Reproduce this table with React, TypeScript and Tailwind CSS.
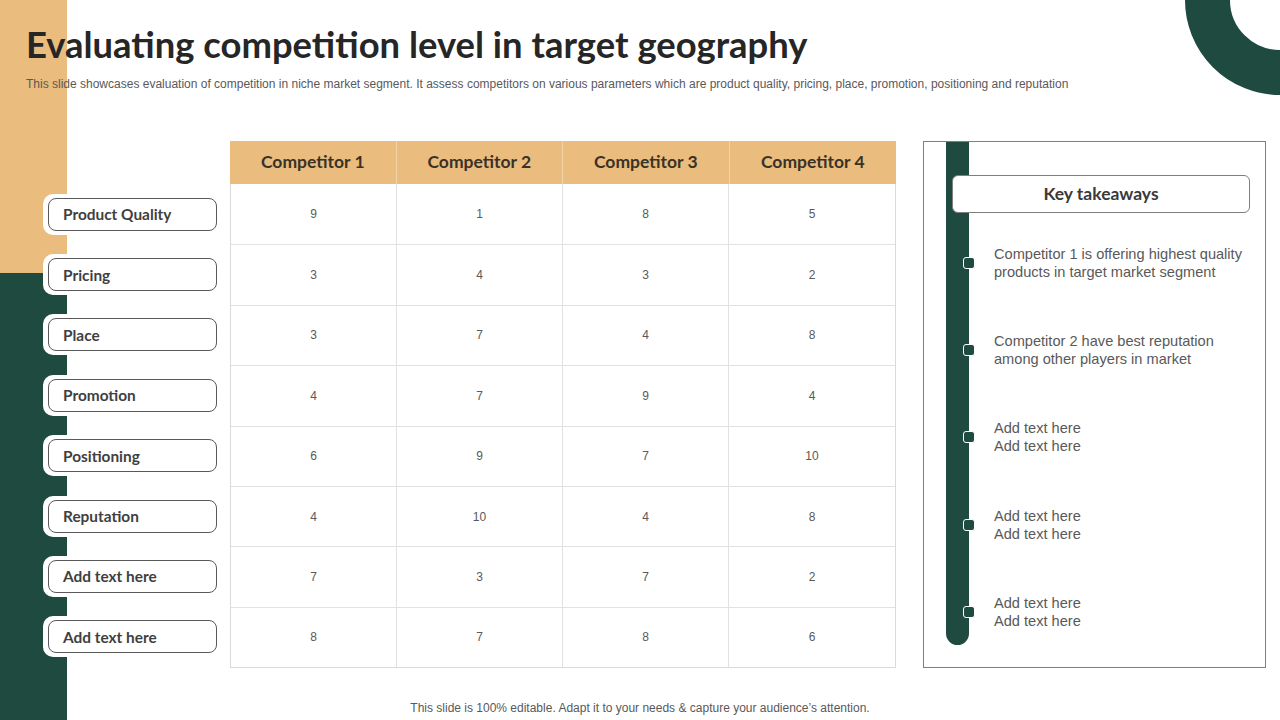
const labels = [
  "Product Quality",
  "Pricing",
  "Place",
  "Promotion",
  "Positioning",
  "Reputation",
  "Add text here",
  "Add text here",
];

const scores = [
  [9, 1, 8, 5],
  [3, 4, 3, 2],
  [3, 7, 4, 8],
  [4, 7, 9, 4],
  [6, 9, 7, 10],
  [4, 10, 4, 8],
  [7, 3, 7, 2],
  [8, 7, 8, 6],
];

const takeaways = [
  ["Competitor 1 is offering highest quality", "products in target market segment"],
  ["Competitor 2 have best reputation", "among other players in market"],
  ["Add text here", "Add text here"],
  ["Add text here", "Add text here"],
  ["Add text here", "Add text here"],
];

const heading = { fontFamily: "Lato, 'Open Sans', sans-serif" };
const body = { fontFamily: "'Liberation Sans', Arial, sans-serif" };

function LabelColumn() {
  return (
    <div className="ml-[17px] w-[174px] pt-[43px]">
      {labels.map((label, i) => (
        <div key={i} className="h-[60.375px] flex items-center">
          <div className="bg-white rounded-[10px] pl-[5px] py-[4px]">
            <div
              className="w-[169px] h-[33px] border border-[#595959] rounded-[8px] pl-[14px] pt-[1px] flex items-center text-[15.4px] font-bold text-[#3f3f3f]"
              style={heading}
            >
              {label}
            </div>
          </div>
        </div>
      ))}
    </div>
  );
}

function ScoreTable() {
  return (
    <div className="ml-[13px] w-[666px]">
      <div className="grid grid-cols-4 h-[43px] bg-[#eabc7e]">
        {[1, 2, 3, 4].map((n) => (
          <div
            key={n}
            className="flex items-center justify-center text-[17.5px] font-bold text-[#3b3226] border-r border-[#f2d3a9] last:border-r-0"
            style={heading}
          >
            Competitor {n}
          </div>
        ))}
      </div>
      <div className="border-l border-r border-b border-[#d9d9d9]">
        {scores.map((row, i) => (
          <div key={i} className="grid grid-cols-4 h-[60.375px] border-t border-[#e2e2e2] first:border-t-0">
            {row.map((v, j) => (
              <div
                key={j}
                className="flex items-center justify-center text-[12px] text-[#595959] border-r border-[#e2e2e2] last:border-r-0"
                style={body}
              >
                {v}
              </div>
            ))}
          </div>
        ))}
      </div>
    </div>
  );
}

function Takeaways() {
  return (
    <div className="relative ml-[27px] w-[343px] h-[527px] border border-[#7f7f7f]">
      <div className="absolute left-[22px] top-0 w-[23px] h-[503px] bg-[#1e4a3f] rounded-b-full" />
      <div className="relative">
        <div
          className="mt-[33px] ml-[28px] w-[298px] h-[38px] bg-white border border-[#7f7f7f] rounded-[6px] flex items-center justify-center text-[17.5px] font-bold text-[#3a3a3a]"
          style={heading}
        >
          Key takeaways
        </div>
        <div className="mt-[6px]">
          {takeaways.map((lines, i) => (
            <div key={i} className="h-[87.3px] flex items-center">
              <div className="ml-[39px] w-[12px] h-[12px] rounded-[3px] bg-[#1e4a3f] border border-white" />
              <div className="ml-[19px] text-[14.6px] leading-[18px] text-[#595959]" style={body}>
                {lines.map((l, k) => (
                  <div key={k}>{l}</div>
                ))}
              </div>
            </div>
          ))}
        </div>
      </div>
    </div>
  );
}

export default function App() {
  return (
    <div className="relative w-[1280px] h-[720px] overflow-hidden bg-white">
      <div className="absolute left-0 top-0 w-[67px] h-full flex flex-col">
        <div className="h-[273px] bg-[#eabc7e]" />
        <div className="flex-1 bg-[#1e4a3f]" />
      </div>
      <div className="absolute left-[1185px] top-[-95px] w-[190px] h-[190px] rounded-full border-[45px] border-[#1e4a3f]" />

      <div className="relative pl-[26px] pt-[23px]">
        <h1 className="text-[36.4px] leading-[42px] font-bold text-[#262626]" style={heading}>
          Evaluating competition level in target geography
        </h1>
        <p className="mt-[11px] text-[12px] leading-[16px] text-[#595959]" style={body}>
          This slide showcases evaluation of competition in niche market segment. It assess competitors on various parameters which are product quality, pricing, place, promotion, positioning and reputation
        </p>

        <div className="mt-[49px] flex items-start">
          <LabelColumn />
          <ScoreTable />
          <Takeaways />
        </div>
      </div>

      <p className="absolute left-0 right-0 top-[700px] text-center text-[12px] leading-[16px] text-[#595959]" style={body}>
        This slide is 100% editable. Adapt it to your needs &amp; capture your audience’s attention.
      </p>
    </div>
  );
}
